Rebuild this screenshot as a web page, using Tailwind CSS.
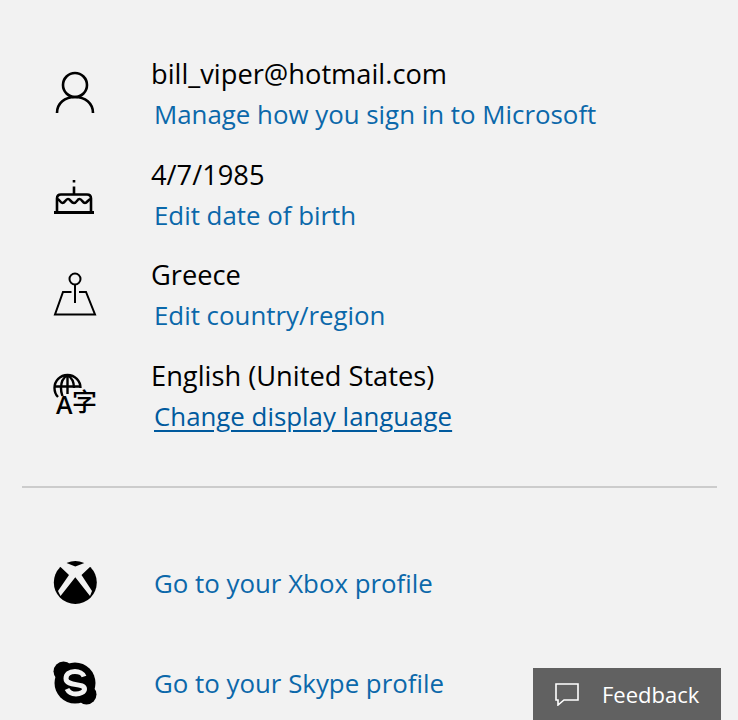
<!DOCTYPE html>
<html><head><meta charset="utf-8">
<script src="https://cdn.jsdelivr.net/npm/@tailwindcss/browser@4"></script>
</head>
<body class="m-0 bg-[#f2f2f2]">
<div class="relative h-[720px] w-[738px] overflow-hidden bg-[#f2f2f2] font-['Open_Sans','Noto_Sans',sans-serif] font-[380] text-[25.85px] leading-[40px]">
  <div class="flex flex-col gap-[20.5px] pl-[53px] pt-[54px]">
    <div class="flex h-[80px]">
      <div class="flex w-[98px] shrink-0 items-center">
        <svg width="46" height="50" viewBox="0 0 46 50" fill="none" stroke="#000" stroke-width="2.6"><circle cx="22" cy="16" r="12"/><path d="M4 44C4 34 12 28 22 28C32 28 40 34 40 44"/></svg>
      </div>
      <div>
        <div class="text-[27.25px] text-black">bill_viper@hotmail.com</div>
        <a class="block pl-[3px] text-[#0b68aa]">Manage how you sign in to Microsoft</a>
      </div>
    </div>
    <div class="flex h-[80px]">
      <div class="flex w-[98px] shrink-0 items-center">
        <svg width="44" height="44" viewBox="0 0 44 44" fill="none" stroke="#000" stroke-width="2.6"><path d="M21 7v2.500M21 13.500v8"/><path d="M4 39V25.500q0-4 4-4h26q4 0 4 4V39"/><path d="M4 26c3 0 3 4 5.500 4s3-4 5.500-4 3 4 6 4 3-4 5.500-4 3 4 5.500 4 3-4 6-4"/><path d="M1 39.500h40" stroke-width="3"/></svg>
      </div>
      <div>
        <div class="text-[27.25px] text-black">4/7/1985</div>
        <a class="block pl-[3px] text-[#0b68aa]">Edit date of birth</a>
      </div>
    </div>
    <div class="flex h-[80px]">
      <div class="flex w-[98px] shrink-0 items-center">
        <svg width="44" height="46" viewBox="0 0 44 46" fill="none" stroke="#000" stroke-width="2"><circle cx="22" cy="7" r="5.500"/><path d="M22 12.500v18.500"/><path d="M18.500 20H10L2 42.500h40L33 20h-7"/></svg>
      </div>
      <div>
        <div class="text-[27.25px] text-black">Greece</div>
        <a class="block pl-[3px] text-[#0b68aa]">Edit country/region</a>
      </div>
    </div>
    <div class="flex h-[80px]">
      <div class="flex w-[98px] shrink-0 items-center">
        <div class="relative h-[46px] w-[46px]">
          <svg class="absolute left-0 top-0" width="30" height="28" viewBox="0 0 30 28" fill="none" stroke="#000" stroke-width="2.400"><path d="M5 24C3 22 1.500 18 1.500 15 1.500 8 7 2 14.500 2S27.500 8 27.500 15"/><path d="M14.500 2C9.500 5 8 10 8 15s1 6 1.500 8M14.500 2C19.500 5 21 10 21 15M14.500 2v19M1.500 13.500h26"/></svg>
          <span class="absolute left-[3px] top-[19px] font-['Open_Sans',sans-serif] text-[25px] font-semibold leading-[25px] text-black">A</span>
          <span class="absolute left-[19px] top-[14px] font-['Noto_Sans_CJK_SC',sans-serif] text-[25px] font-medium leading-[26px] text-black">字</span>
        </div>
      </div>
      <div>
        <div class="text-[27.25px] text-black">English (United States)</div>
        <a class="block pl-[3px] text-[#005a9e] underline underline-offset-[4px]">Change display language</a>
      </div>
    </div>
  </div>
  <div class="ml-[22px] mr-[21px] mt-[50px] h-[2px] bg-[#cccccc]"></div>
  <div class="flex flex-col gap-[56.500px] pl-[53px] pt-[73px]">
    <div class="flex h-[44px] items-center">
      <div class="w-[98px] shrink-0">
        <svg class="block" width="44" height="44" viewBox="0 0 44 44"><circle cx="22.300" cy="21.500" r="21.500" fill="#000"/><path d="M11 1 22.300 5.500 34 1 38 5 28.500 14 39 30 37 35 22.300 16.300 7.500 35 5 30 16 14 6.500 5Z" fill="#f2f2f2"/></svg>
      </div>
      <a class="pl-[3px] text-[#0b68aa]">Go to your Xbox profile</a>
    </div>
    <div class="flex h-[44px] items-center">
      <div class="w-[98px] shrink-0">
        <svg class="block" width="44" height="44" viewBox="0 0 44 44"><circle cx="22" cy="22" r="20.500" fill="#000"/><circle cx="10.500" cy="10.500" r="10" fill="#000"/><circle cx="33.500" cy="33.500" r="10" fill="#000"/><path d="M31 15.500C30 12.500 26 10.500 22 10.500 16 10.500 13 13.500 13 17.500 13 26 31.500 21.500 31.500 28 31.500 31 27 33 23 33 18.500 33 15.500 31 14 28" fill="none" stroke="#f2f2f2" stroke-width="5"/></svg>
      </div>
      <a class="pl-[3px] text-[#0b68aa]">Go to your Skype profile</a>
    </div>
  </div>
  <div class="absolute bottom-0 right-[17px] flex h-[52px] w-[188px] items-center bg-[#616161] pl-[21px] text-[22px] text-white">
    <svg width="26" height="24" viewBox="0 0 26 24" fill="none" stroke="#fff" stroke-width="1.600"><path d="M2 2h22v16H10l-6 5v-5H2z"/></svg>
    <span class="ml-[22px]">Feedback</span>
  </div>
</div>
</body></html>
